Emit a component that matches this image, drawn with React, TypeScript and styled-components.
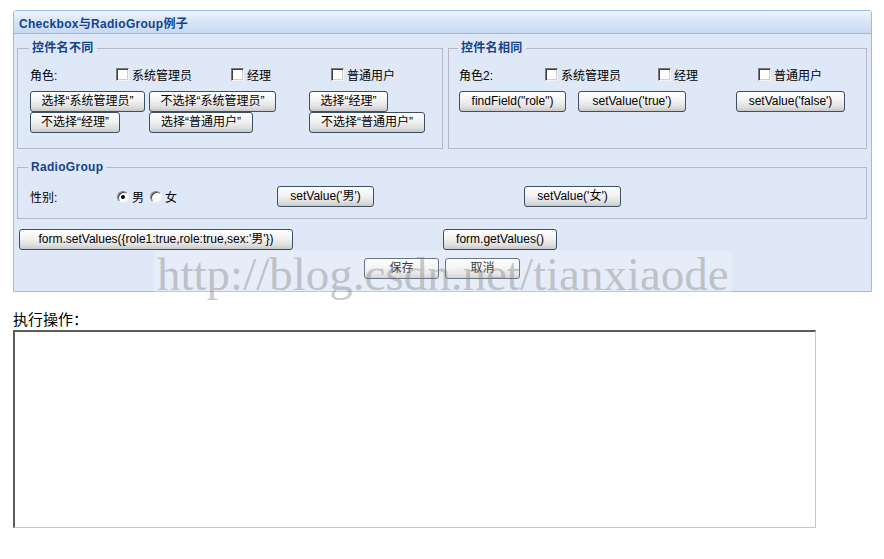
import React from "react";
import styled, { createGlobalStyle } from "styled-components";

const Global = createGlobalStyle`
  html, body { margin: 0; padding: 0; background: #fff; }
  body { font-family: "Liberation Sans", "Noto Sans CJK SC", sans-serif; font-size: 12px; color: #000; }
`;

const Page = styled.div`
  position: relative;
  padding: 10px 0 0 13px;
  width: 884px;
  box-sizing: border-box;
`;

const Panel = styled.div`
  width: 859px;
  box-sizing: border-box;
  border: 1px solid #99bbe8;
  border-radius: 3px 3px 0 0;
  overflow: hidden;
`;

const Header = styled.div`
  height: 23px;
  box-sizing: border-box;
  padding: 0 0 0 5px;
  display: flex;
  align-items: center;
  background: linear-gradient(#eef4fc 0%, #d9e6f7 45%, #c6d9f2 100%);
  border-bottom: 1px solid #99bbe8;
  color: #15428b;
  font: bold 12px "Liberation Sans", "Noto Sans CJK SC", sans-serif;
  letter-spacing: 0.3px;
`;

const Body = styled.div`
  background: #dfe8f6;
  padding: 7px 4px 12px 3px;
  display: flex;
  flex-direction: column;
`;

const TopRow = styled.div`
  display: flex;
  gap: 5px;
`;

const Fieldset = styled.fieldset<{ $w?: number; $pl?: number }>`
  margin: 0;
  flex-shrink: 0;
  box-sizing: border-box;
  width: ${(p) => (p.$w ? `${p.$w}px` : "auto")};
  border: 1px solid #b5b8c8;
  padding: 0 10px 15px ${(p) => p.$pl ?? 12}px;
  min-width: 0;
`;

const Legend = styled.legend<{ $ml?: number }>`
  padding: 0 3px;
  margin-left: ${(p) => p.$ml ?? -1}px;
  color: #15428b;
  font: bold 12px "Liberation Sans", "Noto Sans CJK SC", sans-serif;
  letter-spacing: 0.3px;
  line-height: 14px;
`;

const Grid = styled.div<{ $cols: string }>`
  display: grid;
  grid-template-columns: ${(p) => p.$cols};
  align-items: center;
`;

const CheckRow = styled(Grid)`
  height: 18px;
  margin-top: 10px;
`;

const ButtonGrid = styled(Grid)`
  margin-top: 8px;
  row-gap: 0;
  align-items: start;
`;

const Label = styled.span`
  font-size: 12px;
  font-family: "Liberation Sans", "Noto Sans CJK SC", sans-serif;
`;

const Choice = styled.label`
  display: inline-flex;
  align-items: center;
  gap: 3px;
  font-size: 12px;
`;

const Box = styled.span`
  width: 13px;
  height: 13px;
  box-sizing: border-box;
  background: #fff;
  border-top: 1px solid #7a7a7a;
  border-left: 1px solid #7a7a7a;
  border-right: 1px solid #f4f4f4;
  border-bottom: 1px solid #f4f4f4;
  box-shadow: inset 1px 1px 0 #404040, inset -1px -1px 0 #d4d0c8;
`;

const Radio = styled.span<{ $on?: boolean }>`
  position: relative;
  width: 12px;
  height: 12px;
  box-sizing: border-box;
  border-radius: 50%;
  background: #fff;
  border: 1px solid;
  border-color: #808080 #f0f0f0 #f0f0f0 #808080;
  box-shadow: inset 1px 1px 0 #404040;
  &::after {
    content: "";
    display: ${(p) => (p.$on ? "block" : "none")};
    position: absolute;
    left: 3px;
    top: 3px;
    width: 4px;
    height: 4px;
    border-radius: 50%;
    background: #000;
  }
`;

const Btn = styled.button<{ $w: number }>`
  width: ${(p) => p.$w}px;
  height: 21px;
  box-sizing: border-box;
  padding: 0 4px;
  margin: 0;
  border: 1px solid #3d4f63;
  border-radius: 3px;
  background: linear-gradient(#ffffff 0%, #f2f2f2 45%, #dedede 80%, #c8c8c8 100%);
  font: 12px "Liberation Sans", "Noto Sans CJK SC", sans-serif;
  color: #000;
  white-space: nowrap;
  line-height: 19px;
  text-align: center;
`;

const RadioSet = styled(Fieldset)`
  margin-top: 11px;
  width: 850px;
  padding-bottom: 11px;
`;

const RadioRow = styled(Grid)`
  margin-top: 12px;
  height: 21px;
`;

const Pair = styled.div`
  display: flex;
  align-items: center;
  gap: 6px;
`;

const ActionRow = styled(Grid)`
  margin-top: 10px;
  padding-left: 2px;
`;

const Footer = styled.div`
  margin-top: 8px;
  display: flex;
  justify-content: center;
  gap: 6px;
`;

const Caption = styled.div`
  margin-top: 18px;
  font: 15px "Noto Sans CJK SC", sans-serif;
  line-height: 18px;
`;

const Output = styled.div`
  margin-top: 2px;
  width: 803px;
  height: 198px;
  box-sizing: border-box;
  background: #fff;
  border-top: 2px solid #5c5c5c;
  border-left: 2px solid #5c5c5c;
  border-right: 1px solid #c6c6c6;
  border-bottom: 1px solid #c6c6c6;
`;

const Watermark = styled.div`
  position: absolute;
  left: 154px;
  top: 251px;
  padding: 0 3px;
  font: 47px "Liberation Serif", serif;
  line-height: 47px;
  color: rgba(130, 130, 130, 0.42);
  background: rgba(255, 255, 255, 0.22);
  pointer-events: none;
  white-space: nowrap;
`;

export default function App() {
  return (
    <>
      <Global />
      <Page>
        <Panel>
          <Header>Checkbox与RadioGroup例子</Header>
          <Body>
            <TopRow>
              <Fieldset $w={426} $pl={12}>
                <Legend>控件名不同</Legend>
                <CheckRow $cols="86px 115px 100px auto">
                  <Label>角色:</Label>
                  <Choice><Box />系统管理员</Choice>
                  <Choice><Box />经理</Choice>
                  <Choice><Box />普通用户</Choice>
                </CheckRow>
                <ButtonGrid $cols="119px 160px auto">
                  <Btn $w={115}>选择“系统管理员”</Btn>
                  <Btn $w={127}>不选择“系统管理员”</Btn>
                  <Btn $w={79}>选择“经理”</Btn>
                  <Btn $w={90}>不选择“经理”</Btn>
                  <Btn $w={104}>选择“普通用户”</Btn>
                  <Btn $w={116}>不选择“普通用户”</Btn>
                </ButtonGrid>
              </Fieldset>
              <Fieldset $w={419} $pl={10}>
                <Legend>控件名相同</Legend>
                <CheckRow $cols="86px 113px 100px auto">
                  <Label>角色2:</Label>
                  <Choice><Box />系统管理员</Choice>
                  <Choice><Box />经理</Choice>
                  <Choice><Box />普通用户</Choice>
                </CheckRow>
                <ButtonGrid $cols="119px 158px auto">
                  <Btn $w={107}>findField("role")</Btn>
                  <Btn $w={108}>setValue('true')</Btn>
                  <Btn $w={109}>setValue('false')</Btn>
                </ButtonGrid>
              </Fieldset>
            </TopRow>
            <RadioSet $pl={12}>
              <Legend $ml={-2}>RadioGroup</Legend>
              <RadioRow $cols="87px 160px 247px auto">
                <Label>性别:</Label>
                <Pair>
                  <Choice><Radio $on />男</Choice>
                  <Choice><Radio />女</Choice>
                </Pair>
                <Btn $w={97}>setValue('男')</Btn>
                <Btn $w={97}>setValue('女')</Btn>
              </RadioRow>
            </RadioSet>
            <ActionRow $cols="424px auto">
              <Btn $w={274}>form.setValues({"{"}role1:true,role:true,sex:'男'{"}"})</Btn>
              <Btn $w={114}>form.getValues()</Btn>
            </ActionRow>
            <Footer>
              <Btn $w={75}>保存</Btn>
              <Btn $w={75}>取消</Btn>
            </Footer>
          </Body>
        </Panel>
        <Caption>执行操作：</Caption>
        <Output />
        <Watermark>http://blog.csdn.net/tianxiaode</Watermark>
      </Page>
    </>
  );
}
